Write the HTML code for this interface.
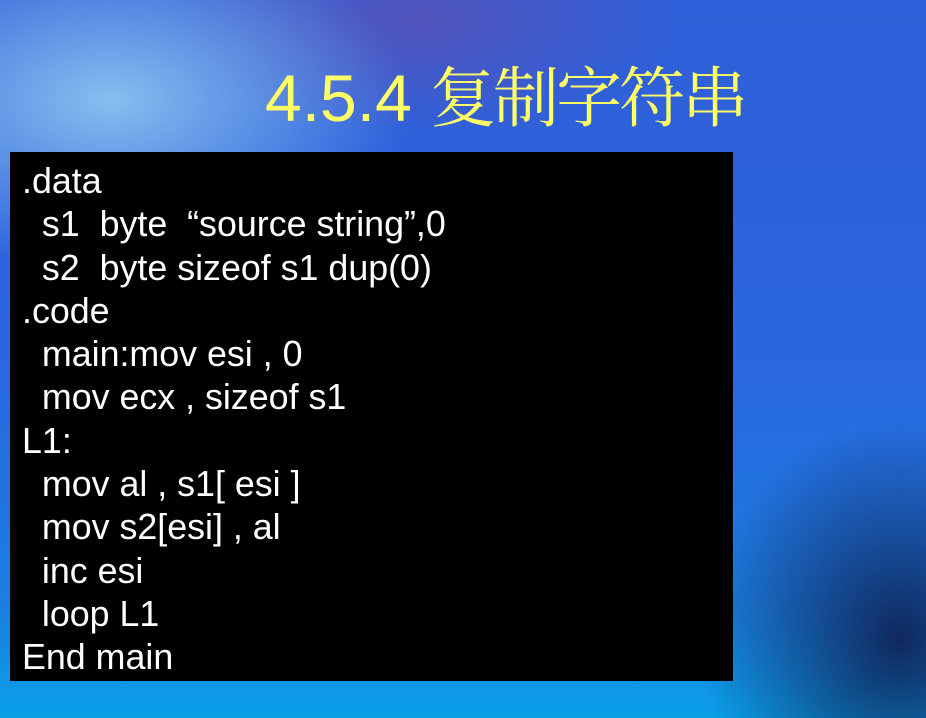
<!DOCTYPE html>
<html><head><meta charset="utf-8"><style>
html,body{margin:0;padding:0}
body{width:926px;height:718px;overflow:hidden;position:relative;
background:
radial-gradient(ellipse 200px 220px at 900px 640px, rgba(15,30,80,0.9), rgba(15,30,80,0) 100%),
radial-gradient(ellipse 300px 170px at 110px 100px, rgba(140,195,240,0.95), rgba(140,195,240,0) 100%),
radial-gradient(ellipse 260px 120px at 420px 20px, rgba(90,80,180,0.8), rgba(90,80,180,0) 100%),
linear-gradient(180deg, #2f5fd8 0%, #2a66e0 50%, #1a7fe0 85%, #0aa0e8 100%);}
.t{position:absolute;left:265px;top:45px;font:66px "Liberation Sans","Noto Serif CJK SC",serif;color:#ffff66;white-space:nowrap}
.t span{letter-spacing:-3px}
.box{position:absolute;left:10px;top:152px;width:723px;height:529px;background:#000}
.code{position:absolute;left:22px;top:160px;font:35.8px/43.3px "Liberation Sans",sans-serif;color:#fff;white-space:pre}
</style></head><body>
<div class="t">4.5.4 <span>复制字符串</span></div>
<div class="box"></div>
<div class="code">.data
  s1  byte  “source string”,0
  s2  byte sizeof s1 dup(0)
.code
  main:mov esi , 0
  mov ecx , sizeof s1
L1:
  mov al , s1[ esi ]
  mov s2[esi] , al
  inc esi
  loop L1
End main</div>
</body></html>
